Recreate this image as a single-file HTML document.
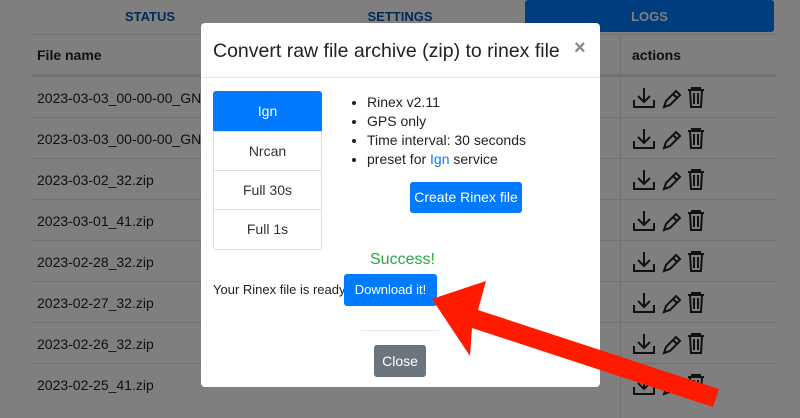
<!DOCTYPE html>
<html><head><meta charset="utf-8"><style>
body{margin:0;width:800px;height:418px;overflow:hidden;font-family:"Liberation Sans",sans-serif;background:#fff;position:relative}
.abs{position:absolute}
.tab{position:absolute;top:0;height:32px;line-height:34px;font-weight:bold;font-size:13px;color:#0056b3;text-align:center}
.row{position:absolute;left:32px;width:744px;height:41px;border-top:1px solid #dee2e6;font-size:14px;color:#222}
.row span{position:absolute;left:5px;top:13px}
.ic{position:absolute;left:600px;top:8px}
.ov{position:absolute;left:0;top:0;width:800px;height:418px;background:rgba(0,0,0,.5)}
.modal{position:absolute;left:201px;top:23px;width:399px;height:364px;background:#fff;border-radius:4px}
.lg{position:absolute;left:12px;width:107px;height:39px;border:1px solid #ddd;text-align:center;line-height:39px;font-size:14px;color:#333;background:#fff}
ul{position:absolute;left:150px;top:70px;margin:0;padding:0 0 0 16px;font-size:14px;color:#222;line-height:19px}
</style></head><body>
<div class="tab" style="left:30px;width:240px">STATUS</div>
<div class="tab" style="left:280px;width:240px">SETTINGS</div>
<div class="tab" style="left:525px;width:249px;background:#007bff;color:#fff;border-radius:3px">LOGS</div>
<div class="row" style="top:34px;border-top:1px solid #dee2e6;font-weight:bold"><span style="top:12px">File name</span><span style="left:600px;top:12px">actions</span></div>
<div class="abs" style="left:620px;top:34px;width:1px;height:384px;background:#dee2e6"></div>
<div class="abs" style="left:32px;top:74px;width:744px;height:2px;background:#dee2e6"></div>
<div id="rows"></div>
<script>
var n=["2023-03-03_00-00-00_GNSS-","2023-03-03_00-00-00_GNSS-","2023-03-02_32.zip","2023-03-01_41.zip","2023-02-28_32.zip","2023-02-27_32.zip","2023-02-26_32.zip","2023-02-25_41.zip"];
var ic='<svg class="ic" width="90" height="26" viewBox="0 0 90 26" fill="none" stroke="#222" stroke-width="2"><path d="M2 15v7h20v-7M12 3v13M6 11l6 6 6-6"/><path d="M32 22l2-6 10-10 4 4-10 10-6 2zM41 9l4 4"/><path d="M56 5h16M60 5V3h8v2M58 5l1 17h10l1-17M62 8v11M66 8v11"/></svg>';
var h="";for(var i=0;i<8;i++)h+='<div class="row" style="top:'+(76+i*41)+'px"><span>'+n[i]+'</span>'+ic+'</div>';
document.getElementById("rows").innerHTML=h;
</script>
<div class="ov"></div>
<div class="modal">
<div class="abs" style="left:12px;top:17px;font-size:19.5px;color:#222">Convert raw file archive (zip) to rinex file</div>
<div class="abs" style="left:373px;top:14px;font-size:20px;color:#888;font-weight:bold">×</div>
<div class="abs" style="left:0;top:54px;width:399px;height:1px;background:#e5e5e5"></div>
<div class="lg" style="top:68px;background:#007bff;border-color:#007bff;color:#fff;border-radius:3px 3px 0 0">Ign</div>
<div class="lg" style="top:108px">Nrcan</div>
<div class="lg" style="top:147px">Full 30s</div>
<div class="lg" style="top:186px;border-radius:0 0 3px 3px">Full 1s</div>
<ul><li>Rinex v2.11</li><li>GPS only</li><li>Time interval: 30 seconds</li><li>preset for <span style="color:#007bff">Ign</span> service</li></ul>
<div class="abs" style="left:209px;top:159px;width:112px;height:31px;background:#007bff;color:#fff;border-radius:3px;font-size:14px;text-align:center;line-height:31px">Create Rinex file</div>
<div class="abs" style="left:169px;top:228px;font-size:16px;color:#28a745">Success!</div>
<div class="abs" style="left:12px;top:259px;font-size:13px;color:#222">Your Rinex file is ready</div>
<div class="abs" style="left:143px;top:251px;width:93px;height:32px;background:#007bff;color:#fff;border-radius:3px;font-size:13px;text-align:center;line-height:32px">Download it!</div>
<div class="abs" style="left:160px;top:307px;width:78px;height:1px;background:#e5e5e5"></div>
<div class="abs" style="left:173px;top:322px;width:52px;height:32px;background:#6c757d;color:#fff;border-radius:3px;font-size:14px;text-align:center;line-height:32px">Close</div>
</div>
<svg class="abs" style="left:0;top:0" width="800" height="418"><path d="M432 299L486 281L478 310L719 389L713 407L472 328L470 356Z" fill="#ff1a00"/></svg>
</body></html>
